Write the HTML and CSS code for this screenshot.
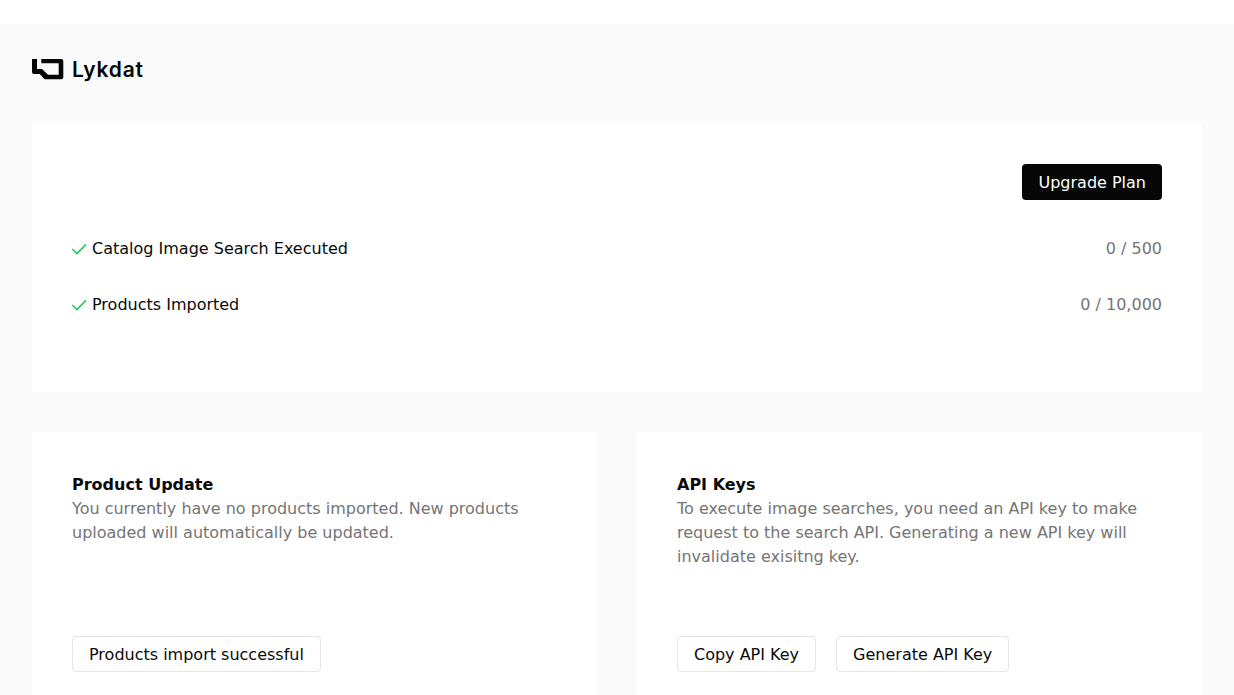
FILE: index.html
```html
<!DOCTYPE html>
<html>
<head>
    <meta charset="utf-8" />
    <meta name="viewport" content="width=device-width, initial-scale=1">
    <title>Lykdat</title>
    <link rel="stylesheet" href="styles.css">
</head>
<body>
    <div id="page-wrapper">
        <div class="logo">
            <svg width="32" height="22" viewBox="0 0 32 22">
                <path fill="#050505" d="M0 0H5V10H10L16 15.700H26.700V4.300H9.300V0H29.300Q31.300 0 31.300 2V18.300Q31.300 20.300 29.300 20.300H12.700L7.700 15H2Q0 15 0 13Z"/>
            </svg>
            <span class="logo-name">Lykdat</span>
        </div>

        <section class="card plan">
            <div class="plan-actions">
                <button class="btn btn-dark">Upgrade Plan</button>
            </div>
            <div class="usage-row">
                <span class="usage-label">
                    <svg class="check" width="16" height="16" viewBox="0 0 16 16" fill="none" stroke="#22c55e" stroke-width="1.6">
                        <path d="M0.300 8L5 12.500L14 3.200"/>
                    </svg>
                    Catalog Image Search Executed
                </span>
                <span class="usage-count">0 / 500</span>
            </div>
            <div class="usage-row">
                <span class="usage-label">
                    <svg class="check" width="16" height="16" viewBox="0 0 16 16" fill="none" stroke="#22c55e" stroke-width="1.6">
                        <path d="M0.300 8L5 12.500L14 3.200"/>
                    </svg>
                    Products Imported
                </span>
                <span class="usage-count">0 / 10,000</span>
            </div>
        </section>

        <div class="columns">
            <section class="card panel">
                <h2>Product Update</h2>
                <p>You currently have no products imported. New products uploaded will automatically be updated.</p>
                <div class="panel-actions">
                    <button class="btn">Products import successful</button>
                </div>
            </section>
            <section class="card panel">
                <h2>API Keys</h2>
                <p>To execute image searches, you need an API key to make request to the search API. Generating a new API key will invalidate exisitng key.</p>
                <div class="panel-actions">
                    <button class="btn">Copy API Key</button>
                    <button class="btn">Generate API Key</button>
                </div>
            </section>
        </div>
    </div>
</body>
</html>
```

FILE: styles.css
```css
*, *:before, *:after{
    box-sizing:border-box;
}
html{
    font-family:'DejaVu Sans', sans-serif;
    font-size:16px;
    line-height:24px;
    background-color:#fff;
    color:#0a0a0a;
}
body{
    margin:0;
    height:695px;
    overflow:hidden;
}
#page-wrapper{
    margin-top:24px;
    padding:32px 32px 40px;
    background:#fafafa;
}
.logo{
    display:flex;
    align-items:center;
    gap:8px;
    height:28px;
    margin-bottom:40px;
}
.logo-name{
    font-family:'Inter', sans-serif;
    font-size:21px;
    font-weight:600;
    letter-spacing:0.8px;
    color:#050505;
}
.card{
    background:#fff;
    padding:40px;
}
.plan{
    height:268px;
}
.plan-actions{
    display:flex;
    justify-content:flex-end;
    margin-bottom:20px;
}
.usage-row{
    display:flex;
    justify-content:space-between;
    align-items:center;
    height:56px;
    padding-top:2px;
}
.usage-label{
    display:flex;
    align-items:center;
    gap:4px;
}
.usage-count{
    color:#757575;
}
.check{
    flex:none;
}
.btn{
    font-family:inherit;
    font-size:16px;
    line-height:24px;
    height:36px;
    padding:2px 16px 0;
    border:1px solid #e5e5e5;
    border-radius:4px;
    background:#fff;
    color:#0a0a0a;
}
.btn-dark{
    background:#070707;
    border:none;
    color:#fff;
}
.columns{
    display:grid;
    grid-template-columns:1fr 1fr;
    gap:40px;
    margin-top:40px;
}
.panel{
    height:300px;
    padding-top:41px;
}
.panel h2{
    margin:0;
    font-size:16px;
    line-height:24px;
    font-weight:700;
}
.panel p{
    margin:0;
    height:139px;
    color:#757575;
}
.panel-actions{
    display:flex;
    gap:20px;
}
```
